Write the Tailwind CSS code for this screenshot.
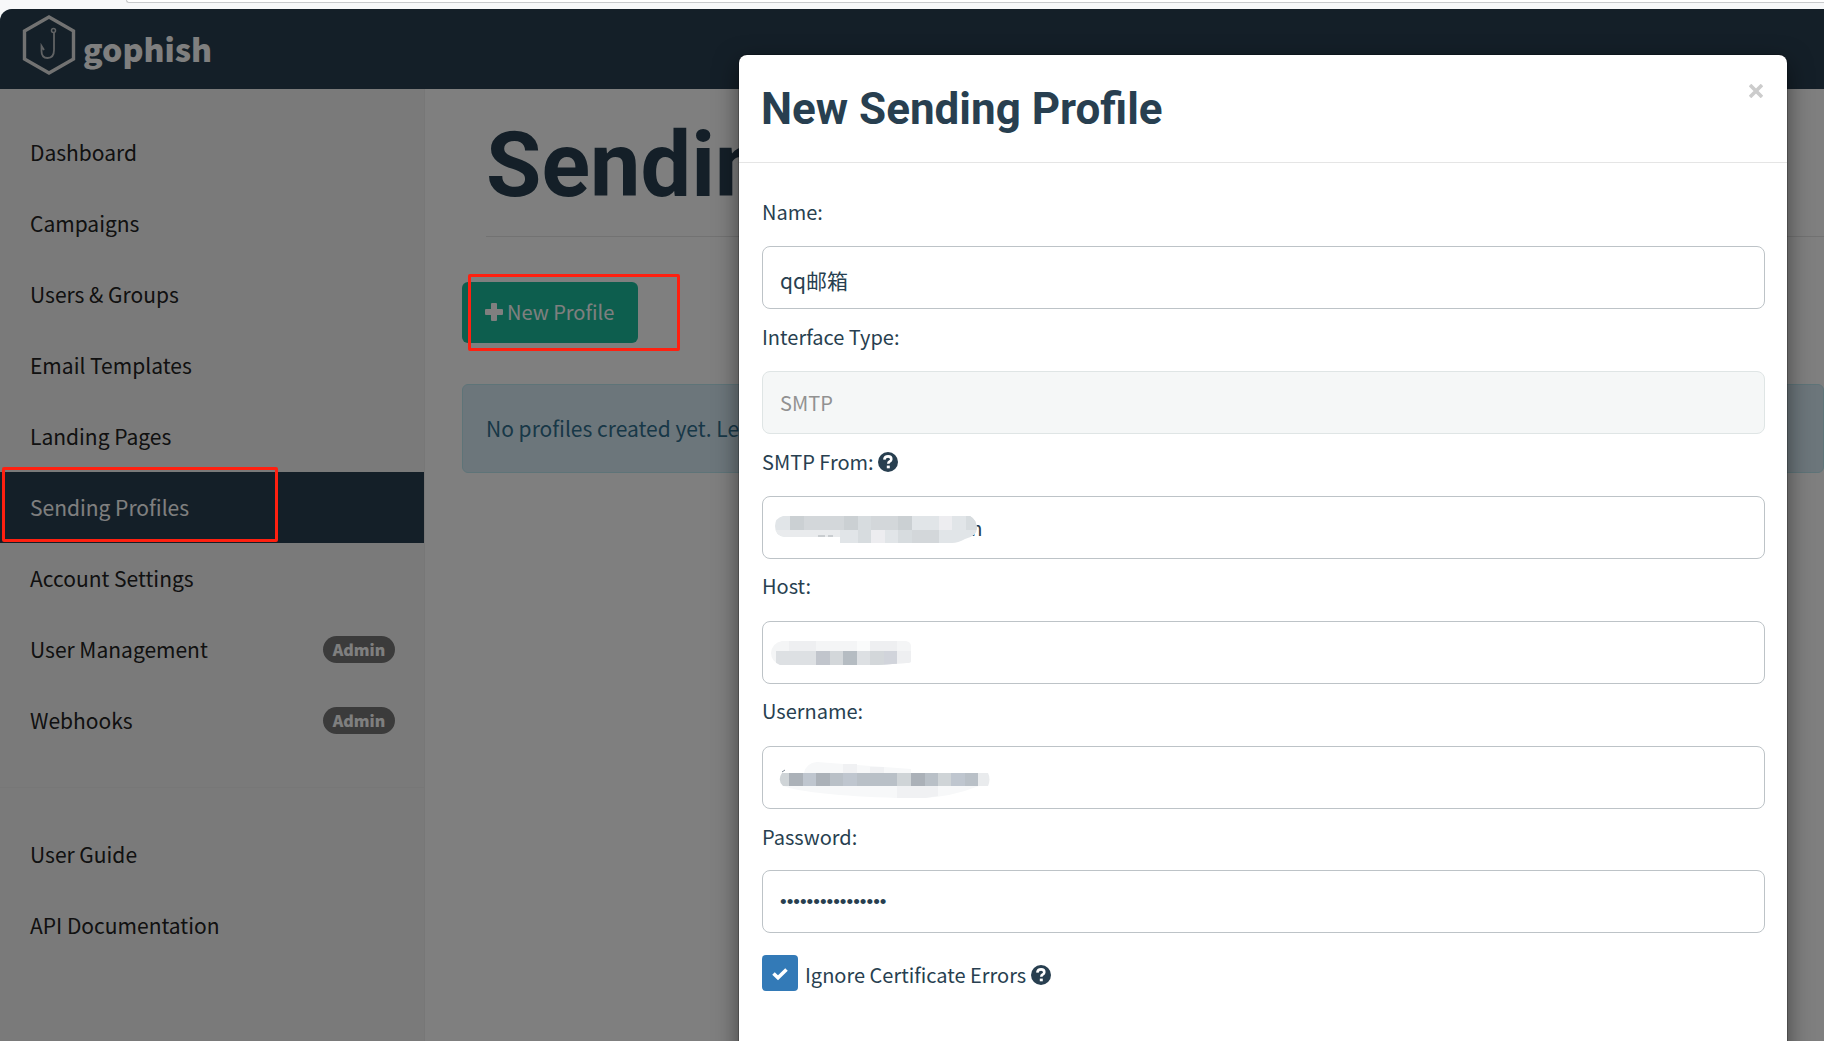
<!DOCTYPE html>
<html lang="en">
<head>
    <meta charset="UTF-8">
    <meta name="viewport" content="width=device-width, initial-scale=1.0">
    <title>Sending Profiles - Gophish</title>
    <script src="https://cdn.jsdelivr.net/npm/@tailwindcss/browser@4"></script>
</head>
<body class="h-screen overflow-hidden flex flex-col bg-[#f7f8f9] font-['Noto_Sans_CJK_SC','Noto_Sans',sans-serif] text-xl text-[#283f50]">

<!-- Browser edge -->
<div class="h-[9px] shrink-0 pl-[126px]">
    <div class="h-[3px] bg-white border-b border-l border-[#c8cacc] rounded-bl-lg"></div>
</div>

<div class="relative flex-1 flex flex-col overflow-hidden rounded-tl-xl bg-white">

    <!-- Navbar -->
    <header class="h-20 shrink-0 bg-[#283f50] pl-[22px]">
        <a href="#" class="flex items-start gap-[7px] pt-[3px] text-white">
            <svg class="w-[54px] h-[64px]" viewBox="0 0 54 64" fill="none" stroke="#e4e4e4">
                <path d="M27 5 51.500 19V47L27 61 2.500 47V19Z" stroke-width="3.400"/>
                <circle cx="31.500" cy="18.500" r="2" stroke="#c0c4c8" stroke-width="1.500"/>
                <path d="M32 20.500V38Q32 46 25.500 46Q19.500 46 19.500 39V34L22 38" stroke="#c0c4c8" stroke-width="1.800"/>
            </svg>
            <span class="pt-3 text-[32px] leading-[48px] font-black">gophish</span>
        </a>
    </header>

    <div class="flex flex-1 min-h-0">
        <!-- Sidebar -->
        <nav class="w-[425px] shrink-0 bg-[#f5f5f5] border-r border-[#eee] pt-7 text-[21px] text-[#222]">
            <ul>
                <li><a href="#" class="flex items-center h-[71px] pl-[30px] pr-[29px]">Dashboard</a></li>
                <li><a href="#" class="flex items-center h-[71px] pl-[30px] pr-[29px]">Campaigns</a></li>
                <li><a href="#" class="flex items-center h-[71px] pl-[30px] pr-[29px]">Users &amp; Groups</a></li>
                <li><a href="#" class="flex items-center h-[71px] pl-[30px] pr-[29px]">Email Templates</a></li>
                <li><a href="#" class="flex items-center h-[71px] pl-[30px] pr-[29px]">Landing Pages</a></li>
                <li class="relative">
                    <a href="#" class="flex items-center h-[71px] pl-[30px] pr-[29px] bg-[#283f50] text-white">Sending Profiles</a>
                    <div class="absolute z-30 left-[2px] -top-[5px] w-[276px] h-[75px] border-3 border-[#ff2010] rounded-xs"></div>
                </li>
                <li><a href="#" class="flex items-center h-[71px] pl-[30px] pr-[29px]">Account Settings</a></li>
                <li><a href="#" class="flex items-center justify-between h-[71px] pl-[30px] pr-[29px]">User Management <span class="w-[72px] h-[27px] rounded-full bg-[#777] text-white text-center text-[16px] leading-[27px] font-black">Admin</span></a></li>
                <li><a href="#" class="flex items-center justify-between h-[71px] pl-[30px] pr-[29px]">Webhooks <span class="w-[72px] h-[27px] rounded-full bg-[#777] text-white text-center text-[16px] leading-[27px] font-black">Admin</span></a></li>
            </ul>
            <hr class="my-[31px] border-[#eee]">
            <ul>
                <li><a href="#" class="flex items-center h-[71px] pl-[30px] pr-[29px]">User Guide</a></li>
                <li><a href="#" class="flex items-center h-[71px] pl-[30px] pr-[29px]">API Documentation</a></li>
            </ul>
        </nav>

        <!-- Main content -->
        <main class="flex-1 min-w-0 pl-[37px]">
            <h1 class="ml-6 h-[148px] pt-[22px] border-b border-[#e4e4e4] font-['Roboto',sans-serif] text-[90px] leading-[110px] font-bold whitespace-nowrap overflow-hidden">Sending Profiles</h1>
            <div class="relative mt-[45px]">
                <button type="button" class="flex items-center gap-1 h-[61px] w-[176px] pl-[23px] pb-0.5 rounded-md bg-[#1abc9c] text-white">
                    <svg class="w-[18px] h-[18px]" viewBox="0 0 18 18" fill="currentColor"><path d="M7 0h4q1 0 1 1v5h5q1 0 1 1v4q0 1-1 1h-5v5q0 1-1 1H7q-1 0-1-1v-5H1q-1 0-1-1V7q0-1 1-1h5V1q0-1 1-1Z"/></svg>
                    New Profile
                </button>
                <div class="absolute z-30 left-[6px] -top-2 w-[212px] h-[77px] border-3 border-[#ff2010] rounded-xs"></div>
            </div>
            <div class="mt-[41px] h-[89px] flex items-center pl-[23px] bg-[#d9edf7] border border-[#bce8f1] rounded-md text-[21px] text-[#31708f] whitespace-nowrap overflow-hidden">No profiles created yet. Let's create one!</div>
        </main>
    </div>

    <!-- Backdrop -->
    <div class="absolute inset-0 z-10 bg-black/50"></div>

    <!-- New profile dialog -->
    <div role="dialog" aria-labelledby="profileTitle" class="absolute z-20 top-[46px] left-[739px] right-[37px] min-h-full bg-white rounded-lg shadow-[0_8px_24px_rgba(0,0,0,0.5)] outline outline-black/20">
        <div class="flex justify-between items-start h-[108px] pl-[22px] pr-6 pt-6 border-b border-[#e5e5e5]">
            <h2 id="profileTitle" class="font-['Roboto',sans-serif] text-[44px] leading-[60px] font-bold">New Sending Profile</h2>
            <button type="button" aria-label="Close" class="mt-[5px] text-[#ccc]">
                <svg class="w-[14px] h-[14px]" viewBox="0 0 14 14" fill="none" stroke="currentColor" stroke-width="3.600"><path d="M1 1 13 13M13 1 1 13"/></svg>
            </button>
        </div>

        <form class="px-[23px] pr-[22px] pt-[21px]">
            <label for="name" class="flex items-center h-[62px] pb-1.5">Name:</label>
            <input id="name" type="text" value="qq邮箱" class="block w-full h-[63px] px-[17px] pt-1 border border-[#bdc3c7] rounded-lg text-[21px]">

            <label for="interface" class="flex items-center h-[62px] pb-1.5">Interface Type:</label>
            <input id="interface" type="text" value="SMTP" disabled class="block w-full h-[63px] px-[17px] border border-[#dfe5e5] rounded-lg bg-[#f5f7f7] text-[#919191]">

            <label for="from" class="flex items-center gap-1 h-[62px] pb-1.5">SMTP From:
                <svg class="w-5 h-5" viewBox="0 0 20 20"><circle cx="10" cy="10" r="10" fill="#283f50"/><path d="M6.300 7.600Q6.700 4.400 10.100 4.400Q13.300 4.400 13.300 7.200Q13.300 8.600 11.500 9.700Q10.300 10.400 10.300 11.700" fill="none" stroke="#fff" stroke-width="2.600"/><path d="M8.800 13.600h3v2.700h-3z" fill="#fff"/></svg>
            </label>
            <div class="relative">
                <input id="from" type="text" value="m" class="block w-full h-[63px] pl-[201px] border border-[#bdc3c7] rounded-lg">
                <svg class="absolute left-[13px] top-5 w-[203px] h-[30px]" viewBox="0 0 203 30">
                    <clipPath id="fromShape"><path d="M8 0H195Q201 3 202 12Q202 20 190 23Q183 27 177 27H65V21H10Q0 20 0 10Q0 2 8 0Z"/></clipPath>
                    <g clip-path="url(#fromShape)">
                        <path fill="#e1e5e8" d="M0 0h203v30H0z"/>
                        <path fill="#cbd0d3" d="M15 0h14v14H15zM69 0h14v14H69zM123 0h14v14h-14z"/>
                        <path fill="#d3d7da" d="M29 0h13v14H29zM42 0h27v14H42zM96 0h27v14H96zM137 14h27v14h-27z"/>
                        <path fill="#d7dcdf" d="M83 0h13v14H83zM191 0h12v14h-12zM123 14h14v14h-14zM83 14h13v14H83z"/>
                        <path fill="#ededf0" d="M164 0h13v14h-13zM96 14h14v14H96z"/>
                        <path fill="#e9ebed" d="M0 14h65v7H0z"/>
                        <path fill="#c9cdd0" d="M43 19h7v2h-7zM53 19h5v2h-5z"/>
                    </g>
                </svg>
            </div>

            <label for="host" class="flex items-center h-[62px] pb-2">Host:</label>
            <div class="relative">
                <input id="host" type="text" class="block w-full h-[63px] px-[17px] border border-[#bdc3c7] rounded-lg">
                <svg class="absolute left-2 top-5 w-[141px] h-[24px]" viewBox="0 0 141 24">
                    <clipPath id="hostShape"><path d="M12 0H136Q141 1 141 5V20Q141 22 137 22L108 24H10Q1 20 1 12Q2 2 12 0Z"/></clipPath>
                    <g clip-path="url(#hostShape)">
                        <path fill="#f4f5f6" d="M0 0h141v24H0z"/>
                        <path fill="#eeeff1" d="M19 0h27v10H19zM100 0h27v10h-27zM127 10h14v14h-14z"/>
                        <path fill="#fafbfb" d="M87 0h13v10H87z"/>
                        <path fill="#dde0e3" d="M6 10h121v14H6z"/>
                        <path fill="#c1c5cc" d="M46 10h14v14H46z"/>
                        <path fill="#b5bcc2" d="M73 10h14v14H73z"/>
                        <path fill="#d3d7da" d="M60 10h13v14H60zM100 10h14v14h-14z"/>
                        <path fill="#d1d4db" d="M114 10h13v14h-13z"/>
                    </g>
                </svg>
            </div>

            <label for="username" class="flex items-center h-[62px] pb-2">Username:</label>
            <div class="relative">
                <input id="username" type="text" class="block w-full h-[63px] px-[17px] border border-[#bdc3c7] rounded-lg">
                <svg class="absolute left-[17px] top-[15px] w-[211px] h-[39px]" viewBox="0 0 211 39">
                    <path fill="#f7f8f9" d="M25 12Q27 2 38 1L78 4V12ZM78 4 132 8V12H78ZM4 25H200Q170 37 140 37H118Q30 34 4 25Z"/>
                    <path fill="#f0f1f3" d="M64 3h14v9H64zM91 6h14v6H91zM118 25h41v10l-12 2h-29z"/>
                    <path fill="#b9c0c7" d="M10 12h189v13H10z"/>
                    <path fill="#cfd4d7" d="M3 12h7v13H4Q-2 19 3 12ZM118 12h14v13h-14zM159 12h13v13h-13z"/>
                    <path fill="#abb1b8" d="M10 12h14v13H10zM37 12h14v13H37zM132 12h14v13h-14z"/>
                    <path fill="#bfc6cf" d="M24 12h13v13H24zM64 12h14v13H64zM172 12h14v13h-14z"/>
                    <path fill="#e9ebed" d="M199 12h10q3 6 0 13h-10z"/>
                    <path fill="none" stroke="#7c8792" d="M3 11l3-2"/>
                </svg>
            </div>

            <label for="password" class="flex items-center h-[61px] pb-1.5">Password:</label>
            <input id="password" type="password" value="abcdefghijklmnop" class="block w-full h-[63px] px-[17px] border border-[#bdc3c7] rounded-lg font-['Liberation_Sans',sans-serif] text-[19px]">

            <div class="flex items-center gap-[7px] pt-[22px]">
                <span class="relative flex">
                    <input id="ignoreCert" type="checkbox" checked class="appearance-none w-9 h-9 rounded bg-[#337ab7]">
                    <svg class="absolute left-[10px] top-3 w-4 h-[14px] pointer-events-none" viewBox="0 0 16 14" fill="none" stroke="#fff" stroke-width="3.600"><path d="M1.500 6.500 6 10.800 14.500 2.500"/></svg>
                </span>
                <label for="ignoreCert" class="flex items-center gap-[5px] pt-1">Ignore Certificate Errors
                    <svg class="w-5 h-5" viewBox="0 0 20 20"><circle cx="10" cy="10" r="10" fill="#283f50"/><path d="M6.300 7.600Q6.700 4.400 10.100 4.400Q13.300 4.400 13.300 7.200Q13.300 8.600 11.500 9.700Q10.300 10.400 10.300 11.700" fill="none" stroke="#fff" stroke-width="2.600"/><path d="M8.800 13.600h3v2.700h-3z" fill="#fff"/></svg>
                </label>
            </div>
        </form>
    </div>
</div>

</body>
</html>
